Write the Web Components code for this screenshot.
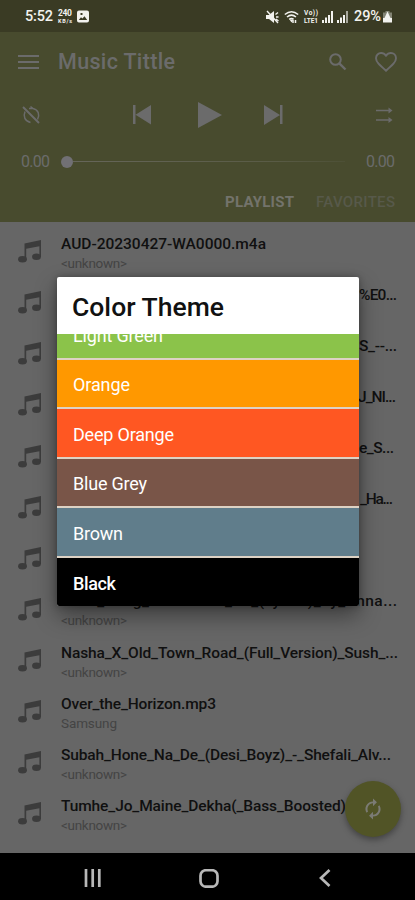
<!DOCTYPE html>
<html lang="en"><head><meta charset="utf-8"><title>Music Player</title>
<style>
html,body{margin:0;padding:0}
body{width:415px;height:900px;overflow:hidden;background:#666;font-family:Roboto,"Liberation Sans",sans-serif}
</style></head><body>
<music-app></music-app>
<script>
const define=(name,html,after)=>{
  const t=document.createElement('template');t.innerHTML=html;
  customElements.define(name,class extends HTMLElement{
    connectedCallback(){
      if(this.shadowRoot)return;
      this.attachShadow({mode:'open'}).append(t.content.cloneNode(true));
      if(after)after(this,this.shadowRoot);
    }
  });
};

// Text spaced to a given width
define('fit-text',`<style>:host{display:inline-block;white-space:nowrap}span{display:inline-block}</style><span><slot></slot></span>`,(h,r)=>{
  const s=r.querySelector('span'),w=+h.getAttribute('w');
  if(!w)return;
  const n=h.textContent.length,nat=s.getBoundingClientRect().width;
  s.style.letterSpacing=((w-nat)/Math.max(1,n-1)).toFixed(3)+'px';
  h.style.width=w+'px';
});

define('status-bar',`<style>
:host{display:flex;height:32px;box-sizing:border-box;background:#3a3b24;color:#f2f2ee;align-items:center;padding:1px 22px 0 25px;font-size:14.5px;font-weight:500}
svg{display:block;fill:currentColor}.sp{flex:1}
.k{display:flex;flex-direction:column;font:700 8.5px/9px Roboto,sans-serif;margin:0 5px;height:15px}.k i{font:700 5.5px/6px Roboto,sans-serif}
.v{display:flex;flex-direction:column;font:700 6.5px/8px Roboto,sans-serif;margin:0 4px 0 5px}
</style><fit-text w="28">5:52</fit-text>
<span class="k"><fit-text w="14">240</fit-text><i><fit-text w="14">KB/s</fit-text></i></span>
<svg width="12" height="13" viewBox="0 0 12 13"><path fill-rule="evenodd" d="M2 .5h8a2 2 0 0 1 2 2v8a2 2 0 0 1-2 2H2a2 2 0 0 1-2-2v-8a2 2 0 0 1 2-2ZM1.800 10h8.400L7.500 6.200 5.400 8.600 4 7.300ZM3.500 3v2h2V3Z"/></svg>
<span class="sp"></span>
<svg width="13" height="14" viewBox="0 0 13 14"><path d="M0 5h3l5-4v12L3 9H0Z"/><path d="M1 1l11 12M9.500 4.500l2.500-2M10 7h2.500M10 9l2.500 2" stroke="currentColor" stroke-width="1.400" fill="none"/></svg>
<svg width="15" height="14" viewBox="0 0 15 14" style="margin-left:5px" ><g fill="none" stroke="currentColor" stroke-width="1.500"><path d="M.8 4.500Q7.500-1 14.200 4.500M3 7q4.500-3.700 9 0M5.200 9.300q2.300-1.800 4.400 0"/><path d="M9 10v3M11.500 13v-3"/></g><path d="M5.500 9.500h4l-2 3Z"/></svg>
<span class="v"><fit-text w="14">Vo))</fit-text><fit-text w="14">LTE1</fit-text></span>
<svg width="11" height="12" viewBox="0 0 11 12"><path d="M0 9h2v3H0zM3 6.500h2V12H3zM6 4h2v8H6zM9 0h2v12H9z"/></svg>
<svg width="11" height="12" viewBox="0 0 11 12" style="margin:0 6px 0 4px"><path d="M0 9h2v3H0zM3 6.500h2V12H3zM6 4h2v8H6z"/><path opacity=".6" d="M9 0h2v12H9z"/></svg>
<fit-text w="27">29%</fit-text>
<svg width="11" height="13" viewBox="0 0 11 13" style="margin-left:1px"><path opacity=".4" d="M3.500 1h4v1.500H10V12H1V2.500h2.500z"/><path d="M5.500 1.500L8.500 8H10v4.500H1V8h1.500Z"/></svg>`);

define('player-header',`<style>
:host{display:block;height:190px;box-sizing:border-box;background:#484b2e;color:#6b6b6b;overflow:hidden}
svg{display:block;fill:none;stroke:currentColor}
div{display:flex;align-items:center;box-sizing:border-box}
.a{height:60px;padding:0 18px 0 18px}.a fit-text{font-size:21.5px;font-weight:500;margin:-1px 0 0 19px}
.sp{flex:1}.b{height:46px;padding:0 20px 0 21px}.f{fill:currentColor;stroke:none}
.c{height:47px;padding:0 20px 0 21px;font-size:16px}
.dot{width:12px;height:12px;border-radius:50%;background:#717074;margin-left:11px}.ln{height:1px;width:272px;background:linear-gradient(90deg,#66665a,#595b45 75%,#4d5036)}
.d{height:33px;justify-content:flex-end;gap:22px;padding:0 20px 0 0;font-size:15px}
.p{font-weight:700;color:#73736b}.q{font-weight:500;color:#57594a}
</style>
<div class="a"><svg width="21" height="16" viewBox="0 0 21 16" stroke-width="2"><path d="M0 2h21M0 8h21M0 14h21"/></svg><fit-text w="117">Music Tittle</fit-text><span class="sp"></span>
<svg width="18" height="18" viewBox="0 0 18 18" stroke-width="2"><circle cx="6.500" cy="6.500" r="5.300"/><path d="m10.300 10.300 6.200 6.200" stroke-width="2.400"/></svg>
<svg width="22" height="20" viewBox="0 0 22 20" stroke-width="1.900" style="margin-left:28px"><path d="M11 18.700C4.600 13.100 1 10 1 6.200 1 3.200 3.300 1 6.100 1 8 1 9.900 2 11 3.600 12.100 2 14 1 15.900 1 18.700 1 21 3.200 21 6.200c0 3.800-3.600 6.900-10 12.500Z"/></svg></div>
<div class="b"><svg width="20" height="20" viewBox="0 0 20 20" stroke-width="1.500"><path d="m2 2 16 16" stroke-width="2"/><path d="M4 6.500c-2 5-.2 9.500 5.500 11M8 3.500h4l-2.500-2M12 3.500c5.500 1.200 7 6.500 4.500 11"/></svg>
<svg class="f" width="20" height="20" viewBox="0 0 20 20" style="margin-left:91px"><path d="M1 0h2.500v19H1zM19 0v19.500L3.500 9.700Z"/></svg>
<svg class="f" width="24" height="26" viewBox="0 0 24 26" style="margin-left:46px"><path d="M0 0 24 13 0 26Z"/></svg>
<svg class="f" width="20" height="20" viewBox="0 0 20 20" style="margin-left:42px"><path d="M16 0h2.500v19H16zM0 0v20L16 10Z"/></svg><span class="sp"></span>
<svg width="19" height="16" viewBox="0 0 19 16" stroke-width="1.700" style="margin-right:1px"><path d="M1 3.500h14M1 13h14"/><path class="f" d="M13.500 .5 17.500 3.500 13.500 6.500ZM13.500 10 17.500 13l-4 3Z"/></svg></div>
<div class="c"><fit-text w="29">0.00</fit-text><span class="dot"></span><span class="ln"></span><span class="sp"></span><fit-text w="29">0.00</fit-text></div>
<div class="d"><fit-text class="p" w="69">PLAYLIST</fit-text><fit-text class="q" w="79">FAVORITES</fit-text></div>`);

define('song-row',`<style>
:host{display:flex;height:51.14px;box-sizing:border-box;padding-left:18px;color:#101010}
svg{display:block;margin:18px 20px 0 0;flex:none;fill:#3c3c3c}
div{flex:none;width:336px;padding-top:11.500px}.t{display:block;height:20px;font-size:15.500px;line-height:20px;font-weight:500;white-space:nowrap}
.s{display:block;font-size:13.500px;line-height:17px;color:#444;margin-top:1px}
</style><svg width="23" height="23" viewBox="0 0 23 23"><path d="M6.500 3.500 23 0v17h-1.600V6.200L8.200 8.700V19H6.500Z"/><ellipse cx="4.500" cy="19.300" rx="4.400" ry="3.300"/><ellipse cx="18.500" cy="16.700" rx="4.400" ry="3.300"/></svg>
<div><span class="t"></span><span class="s"></span></div>`,(h,r)=>{
  const put=(el,text,w,right)=>{const f=document.createElement('fit-text');f.textContent=text;if(w)f.setAttribute('w',w);if(right)f.style.marginLeft=(right-61-w)+'px';el.append(f)};
  put(r.querySelector('.t'),h.dataset.title,h.dataset.w,h.dataset.end);
  const s=h.dataset.artist;
  if(s)put(r.querySelector('.s'),s,s==='Samsung'?56:66);
});

define('song-list',`<style>:host{display:block;height:631px;overflow:hidden;background:#666}</style><slot></slot>`);

define('theme-option',`<style>:host{display:flex;align-items:center;box-sizing:border-box;height:49.55px;padding:2px 0 0 16px;border-bottom:2px solid #ddd2c4;background:var(--c);color:#fff;font-size:18px;flex:none}
:host([last]){border-bottom:0;height:48px}</style><slot></slot>`);

define('theme-dialog',`<style>
:host{position:absolute;left:57px;top:277px;width:302px;height:329px;display:flex;flex-direction:column;background:#fff;border-radius:2px;overflow:hidden;box-shadow:0 10px 22px rgba(0,0,0,.4),0 0 7px rgba(0,0,0,.28)}
h2{margin:0;height:57px;box-sizing:border-box;padding:2px 0 0 15px;display:flex;align-items:center;font-size:26.5px;font-weight:500;color:#111;flex:none}
.l{height:272px;overflow:hidden;display:flex;flex-direction:column;justify-content:flex-end}
</style><h2><fit-text w="152">Color Theme</fit-text></h2><div class="l">
<theme-option style="--c:#8bc34a"><fit-text w="90">Light Green</fit-text></theme-option>
<theme-option style="--c:#ff9800"><fit-text w="57">Orange</fit-text></theme-option>
<theme-option style="--c:#ff5722"><fit-text w="101">Deep Orange</fit-text></theme-option>
<theme-option style="--c:#795548"><fit-text w="74">Blue Grey</fit-text></theme-option>
<theme-option style="--c:#607d8b"><fit-text w="50">Brown</fit-text></theme-option>
<theme-option last style="--c:#000;font-weight:500"><fit-text w="43">Black</fit-text></theme-option></div>`);

define('refresh-button',`<style>:host{position:absolute;left:345px;top:781px;width:56px;height:56px;border-radius:50%;background:#515426;display:flex;align-items:center;justify-content:center;box-shadow:0 3px 6px rgba(0,0,0,.35)}</style>
<svg width="22" height="22" viewBox="0 0 24 24" fill="#7b7b74"><path d="M12 5.800V9l4.300-4.300L12 .5v3.200A8.200 8.200 0 0 0 5 16.200l1.600-1.600A6.100 6.100 0 0 1 12 5.800Zm7 2-1.600 1.600A6.100 6.100 0 0 1 12 18.200V15l-4.300 4.300L12 23.500v-3.200A8.200 8.200 0 0 0 19 7.800Z"/></svg>`);

define('nav-bar',`<style>:host{display:flex;height:47px;background:#000;align-items:center;padding:3px 0 0 84px;box-sizing:border-box}svg{display:block;fill:none;stroke:#b8b8b8;stroke-width:2.700}</style>
<svg width="17" height="18" viewBox="0 0 17 18"><path d="M2 0v18M8.700 0v18M15.300 0v18"/></svg>
<svg width="20" height="19" viewBox="0 0 20 19" style="margin-left:98px"><rect x="1.500" y="1.200" width="17" height="16.500" rx="5.500"/></svg>
<svg width="12" height="18" viewBox="0 0 12 18" style="margin-left:100px"><path d="M10.500 1 2 9l8.500 8"/></svg>`);

define('music-app',`<style>:host{display:block;position:relative;width:415px;height:900px;overflow:hidden}</style>
<status-bar></status-bar><player-header></player-header>
<song-list>
<song-row data-title="AUD-20230427-WA0000.m4a" data-w="205" data-artist="&lt;unknown&gt;"></song-row>
<song-row data-title="%E0..." data-w="38" data-end="397"></song-row>
<song-row data-title="S_--..." data-w="38" data-end="397"></song-row>
<song-row data-title="J_NI..." data-w="38" data-end="396"></song-row>
<song-row data-title="e_S..." data-w="35" data-end="394"></song-row>
<song-row data-title="_Ha..." data-w="33" data-end="393"></song-row>
<song-row data-title=""></song-row>
<song-row data-title="Main_Rang_Sharbaton_Ka_(Lyrics)_by_Anna..." data-w="336" data-artist="&lt;unknown&gt;"></song-row>
<song-row data-title="Nasha_X_Old_Town_Road_(Full_Version)_Sush_..." data-w="337" data-artist="&lt;unknown&gt;"></song-row>
<song-row data-title="Over_the_Horizon.mp3" data-w="155" data-artist="Samsung"></song-row>
<song-row data-title="Subah_Hone_Na_De_(Desi_Boyz)_-_Shefali_Alv..." data-w="330" data-artist="&lt;unknown&gt;"></song-row>
<song-row data-title="Tumhe_Jo_Maine_Dekha(_Bass_Boosted)" data-w="285" data-artist="&lt;unknown&gt;"></song-row>
</song-list>
<nav-bar></nav-bar><refresh-button></refresh-button><theme-dialog></theme-dialog>`);
</script></body></html>
